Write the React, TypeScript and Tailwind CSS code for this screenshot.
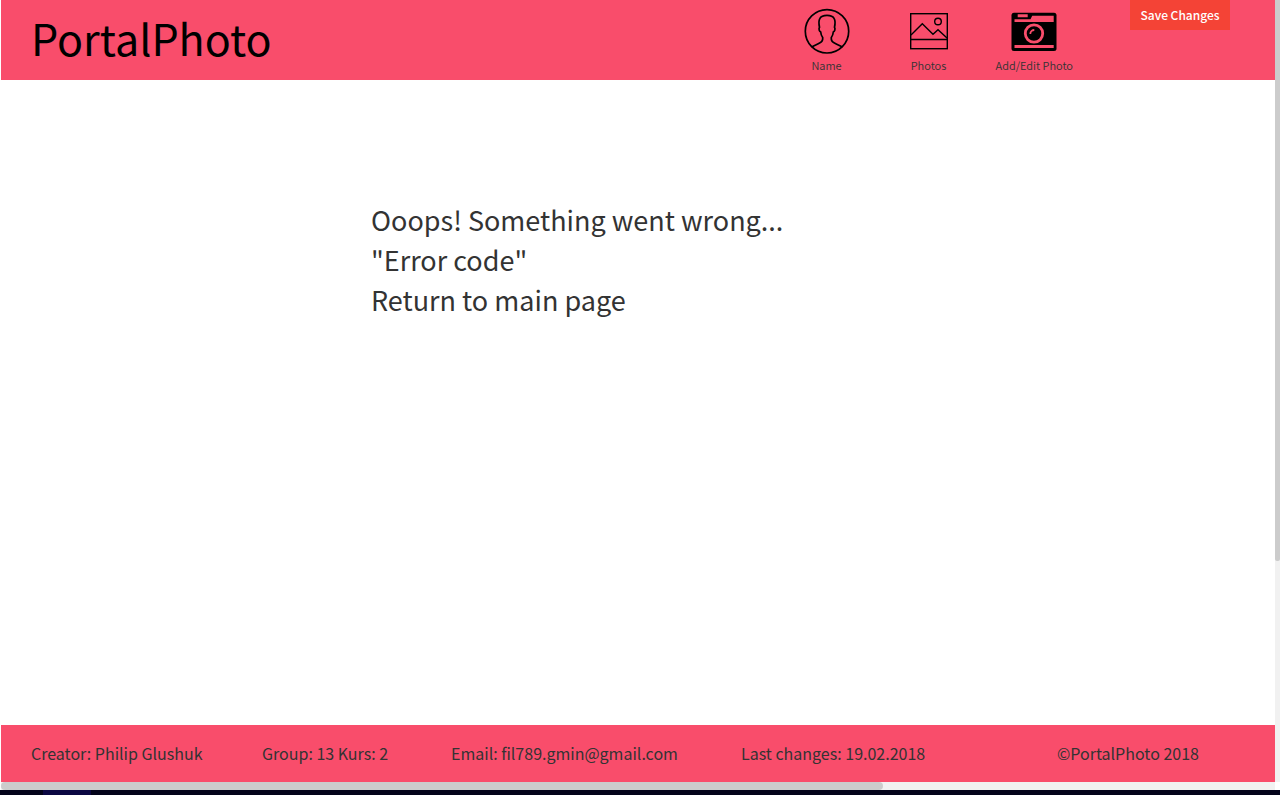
import React from "react";

function PersonIcon() {
  return (
    <svg width="46" height="46" viewBox="0 0 46 46" fill="none" stroke="#000" strokeWidth="1.700" aria-hidden="true">
      <circle cx="23" cy="23.300" r="21.700" />
      <path d="M7.500 39c2-1.200 5.500-2.600 8.500-4.200 2.300-1.200 3-2.300 2.700-5.300-1.200-1.500-1.800-3.300-2-5.500-1.500-.8-2.200-3.200-1.200-4.700-.7-3.300-.9-6.500.3-8.600C17 8.300 19.600 7.400 23 7.400s6 .9 7.200 3.300c1.200 2.100 1 5.300.3 8.600 1 1.500.3 3.900-1.200 4.700-.2 2.200-.8 4-2 5.500-.3 3 .4 4.100 2.700 5.300 3 1.600 6.500 3 8.500 4.200" />
    </svg>
  );
}

function PictureIcon() {
  return (
    <svg width="38" height="46" viewBox="0 0 38 46" fill="none" stroke="#000" strokeWidth="1.400" aria-hidden="true">
      <rect x="0.700" y="5.700" width="36.600" height="35" />
      <path d="M0.700 31.500H37.300M1 27 12.300 15.700 23 26.300l5-4.600L37 30" />
      <circle cx="28" cy="13.500" r="3.300" />
    </svg>
  );
}

function CameraIcon() {
  return (
    <svg width="46" height="46" viewBox="0 0 46 46" aria-hidden="true">
      <rect x="0.500" y="4.700" width="45" height="38.300" rx="2.500" fill="#000" />
      <path d="M6.700 6.200h10v3h-10zM3.500 11.200h16l1.700-3.500h21.500v6.300h-39.200zM3.500 37h39.200v3H3.500z" fill="#f94d6b" />
      <circle cx="23" cy="25.500" r="11.500" fill="#000" />
      <circle cx="23" cy="25.500" r="8.700" fill="none" stroke="#f94d6b" strokeWidth="2.800" />
      <path d="M19.300 26a4 4 0 0 1 4-4" fill="none" stroke="#f94d6b" strokeWidth="1.800" />
    </svg>
  );
}

function NavItem({ label, children }: { label: string; children: React.ReactNode }) {
  return (
    <a href="#" className="flex flex-col items-center text-[11px] leading-[22px] font-[350] text-[#333]">
      {children}
      <span>{label}</span>
    </a>
  );
}

export default function App() {
  return (
    <div className="flex min-h-screen flex-col bg-white font-['Noto_Sans_CJK_SC',sans-serif] text-[#333]">
      <div className="flex grow">
        <div className="flex grow flex-col pl-px">
          <header className="flex h-20 items-start bg-[#f94d6b] pr-[45px] pl-[30px]">
            <h1 className="grow text-[43px] leading-[74px] text-black">PortalPhoto</h1>
            <nav className="mr-[57px] flex gap-12 pt-2">
              <NavItem label="Name"><PersonIcon /></NavItem>
              <div className="pl-3"><NavItem label="Photos"><PictureIcon /></NavItem></div>
              <NavItem label="Add/Edit Photo"><CameraIcon /></NavItem>
            </nav>
            <button type="button" className="h-[30px] w-[100px] bg-[#f44336] text-[12px] font-medium whitespace-nowrap text-white">
              Save Changes
            </button>
          </header>
          <main className="grow pt-[120px] pl-[370px] text-[27px] leading-10">
            <p>Ooops! Something went wrong...</p>
            <p>"Error code"</p>
            <a href="#">Return to main page</a>
          </main>
          <footer className="flex h-[57px] items-center bg-[#f94d6b] pb-0.5 pl-[30px] text-[16px] whitespace-nowrap">
            <p className="w-[231px]">Creator: Philip Glushuk</p>
            <p className="w-[189px]">Group: 13 Kurs: 2</p>
            <p className="w-[290px]">Email: fil789.gmin@gmail.com</p>
            <p className="w-[316px]">Last changes: 19.02.2018</p>
            <p>©PortalPhoto 2018</p>
          </footer>
        </div>
        <div className="w-[5px] bg-[#f1f1f1]">
          <div className="h-[561px] rounded-b-xs bg-[#ccc]" />
        </div>
      </div>
      <div className="mr-[5px] ml-px h-2 bg-[#f1f1f1]">
        <div className="h-2 w-[882px] rounded-full bg-[#ccc]" />
      </div>
      <div className="h-[5px] bg-[#03031a] pl-[43px]">
        <div className="h-[5px] w-12 bg-[#0b0742]" />
      </div>
    </div>
  );
}
